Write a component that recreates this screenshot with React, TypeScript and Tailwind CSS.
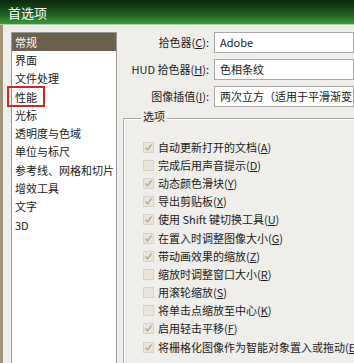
import React from 'react';

const navItems = ['常规', '界面', '文件处理', '性能', '光标', '透明度与色域', '单位与标尺', '参考线、网格和切片', '增效工具', '文字', '3D'];

const options: { label: string; key: string; checked: boolean }[] = [
  { label: '自动更新打开的文档', key: 'A', checked: true },
  { label: '完成后用声音提示', key: 'D', checked: false },
  { label: '动态颜色滑块', key: 'Y', checked: true },
  { label: '导出剪贴板', key: 'X', checked: true },
  { label: '使用 Shift 键切换工具', key: 'U', checked: true },
  { label: '在置入时调整图像大小', key: 'G', checked: true },
  { label: '带动画效果的缩放', key: 'Z', checked: true },
  { label: '缩放时调整窗口大小', key: 'R', checked: false },
  { label: '用滚轮缩放', key: 'S', checked: false },
  { label: '将单击点缩放至中心', key: 'K', checked: false },
  { label: '启用轻击平移', key: 'F', checked: true },
  { label: '将栅格化图像作为智能对象置入或拖动', key: 'E', checked: true },
];

const fields = [
  { label: '拾色器', key: 'C', value: 'Adobe' },
  { label: 'HUD 拾色器', key: 'H', value: '色相条纹' },
  { label: '图像插值', key: 'I', value: '两次立方（适用于平滑渐变）' },
];

function Check({ checked }: { checked: boolean }) {
  return (
    <span className="w-[11px] h-[11px] shrink-0 border border-[#d8d2c4] bg-[#e9e5dc] flex items-center justify-center">
      {checked && (
        <svg width="9" height="9" viewBox="0 0 9 9">
          <path d="M1.5 4.5 L3.6 6.8 L7.6 1.5" fill="none" stroke="#b9ae98" strokeWidth="1.6" />
        </svg>
      )}
    </span>
  );
}

export default function App() {
  return (
    <div
      className="w-[354px] h-[363px] overflow-hidden relative bg-[#efeeea] text-[#1a1a1a] text-[11px]"
      style={{ fontFamily: '"Noto Sans CJK SC", "Noto Sans", sans-serif' }}
    >
      {/* title bar */}
      <div className="h-[25px] bg-gradient-to-b from-[#0c280d] via-[#1b551c] to-[#3c973c] border-b border-[#9ed89a] flex items-center pl-[8px]">
        <span className="text-white text-[13px] leading-none">首选项</span>
      </div>

      <div className="flex h-[338px] border-l-[3px] border-[#a3927a]">
        {/* category list */}
        <div className="ml-[8px] mt-[7px] w-[106px] shrink-0 bg-white border border-[#9a9a9a] h-[340px]">
          {navItems.map((item, i) => (
            <div
              key={item}
              className={`h-[18.3px] flex items-center pl-[3px] leading-none whitespace-nowrap ${i === 0 ? 'bg-[#6c604f] text-white' : ''}`}
            >
              {item}
            </div>
          ))}
        </div>

        {/* right side */}
        <div className="flex-1 ml-[6px] min-w-0">
          <div className="mt-[7px] flex flex-col gap-[6px]">
            {fields.map((f) => (
              <div key={f.key} className="flex items-center h-[21px]">
                <div className="w-[104px] text-right pr-[2px] whitespace-nowrap">
                  {f.label}(<span className="underline">{f.key}</span>):
                </div>
                <div className="ml-[3px] w-[140px] shrink-0 h-[21px] bg-white border border-[#a8a8a8] flex items-center pl-[5px] whitespace-nowrap overflow-hidden">
                  {f.value}
                </div>
              </div>
            ))}
          </div>

          {/* options group */}
          <div className="relative mt-[11px] w-[260px] h-[260px] border border-[#a6a6a6] shadow-[inset_1px_1px_0_#ffffff]">
            <span className="absolute -top-[8px] left-[17px] bg-[#efeeea] px-[2px] leading-none">选项</span>
            <div className="pt-[19px] pl-[19px] flex flex-col">
              {options.map((o) => (
                <div key={o.label} className="h-[18.2px] flex items-center gap-[4px] whitespace-nowrap">
                  <Check checked={o.checked} />
                  <span className="leading-none">
                    {o.label}(<span className="underline">{o.key}</span>)
                  </span>
                </div>
              ))}
            </div>
          </div>
        </div>
      </div>

      {/* highlight box */}
      <div className="absolute left-[7px] top-[86px] w-[38px] h-[21px] border-2 border-[#d42525]" />
    </div>
  );
}
